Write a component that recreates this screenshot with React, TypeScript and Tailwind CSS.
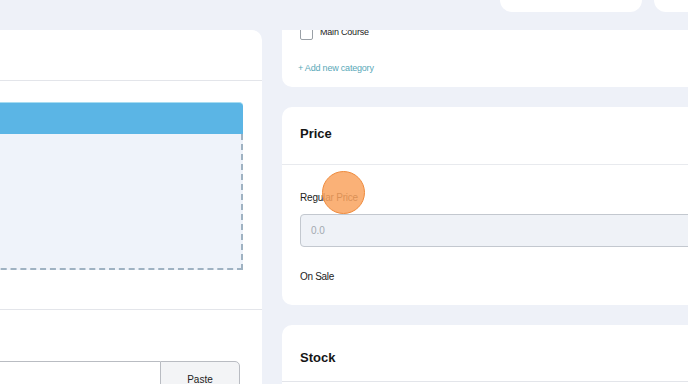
import React from 'react';

const App: React.FC = () => {
  return (
    <div className="relative w-[688px] h-[384px] overflow-hidden bg-[#eef1f8] font-['Liberation_Sans',Arial,sans-serif]">
      {/* Top bar */}
      <div className="h-[30px] flex items-start justify-end gap-3 relative z-10 bg-[#eef1f8]">
        <button className="w-[142px] h-[36px] -mt-[24px] bg-white rounded-[12px] flex items-end justify-center pb-[10px] text-[9px] text-[#9dd3e8]">
          Save as Draft
        </button>
        <button className="w-[142px] h-[36px] -mt-[24px] -mr-[108px] bg-white rounded-[12px] flex items-end justify-center pb-[10px] text-[9px] text-[#9dd3e8]">
          Publish
        </button>
      </div>

      {/* Body */}
      <div className="flex items-start gap-5 h-[354px]">
        {/* Left column */}
        <div className="flex-none w-[300px] -ml-[38px] bg-white rounded-tr-[10px]">
          <div className="h-[51px] border-b border-[#e3e5ea]" />
          <div className="pt-[21px] pl-[19px] pr-[19px] pb-[39px] border-b border-[#e3e5ea]">
            <div className="h-[32px] bg-[#5bb5e5] border-t border-[#a6dcf1] rounded-tr-[4px]" />
            <div className="h-[136px] bg-[#eff3fa] border-r-2 border-b-2 border-dashed border-[#9fb2c2]" />
          </div>
          <div className="pt-[51px] pl-[19px] pr-[22px] pb-[20px]">
            <div className="flex h-[32px]">
              <div className="flex-1 border-t border-l border-[#b9bcc2] bg-white" />
              <button className="w-[80px] border border-[#b9bcc2] bg-[#f3f4f6] rounded-tr-[5px] text-[10px] text-[#222] pt-[10px] flex justify-center items-start">
                Paste
              </button>
            </div>
          </div>
        </div>

        {/* Right column */}
        <div className="flex-none w-[440px] flex flex-col gap-5">
          <div className="shrink-0 -mt-[30px] bg-white rounded-b-[10px] pt-[26px] px-[18px] pb-[11px]">
            <label className="flex items-center gap-[7px] h-[14px]">
              <span className="w-[13px] h-[13px] border border-[#9aa0a6] rounded-[2px] bg-white" />
              <span className="text-[9px] text-[#222] tracking-[-0.2px]">Main Course</span>
            </label>
            <div className="mt-[22px] h-[14px] flex items-center -ml-[2px] text-[9px] text-[#5aa8b8] tracking-[-0.2px]">
              + Add new category
            </div>
          </div>

          <div className="shrink-0 bg-white rounded-[10px]">
            <div className="h-[58px] border-b border-[#e8eaee] pt-[19px] px-[18px]">
              <div className="text-[13px] leading-[16px] font-bold text-[#151515]">Price</div>
            </div>
            <div className="pt-[26px] px-[18px] pb-[21px]">
              <div className="text-[10px] leading-[14px] text-[#222] tracking-[-0.2px]">Regular Price</div>
              <div className="mt-[9px] h-[33px] bg-[#eff2f7] border border-[#c3c8cf] rounded-[4px] flex items-center pl-[10px] text-[10px] text-[#a3a9b1]">
                0.0
              </div>
              <div className="mt-[23px] text-[10px] leading-[14px] text-[#222] tracking-[-0.3px]">On Sale</div>
            </div>
          </div>

          <div className="shrink-0 bg-white rounded-[10px]">
            <div className="h-[57px] border-b border-[#e3e5ea] pt-[25px] px-[18px]">
              <div className="text-[13px] leading-[16px] font-bold text-[#151515]">Stock</div>
            </div>
            <div className="h-[40px]" />
          </div>
        </div>
      </div>

      {/* Click highlight */}
      <div className="absolute left-[322px] top-[171px] w-[43px] h-[43px] rounded-full bg-[#f9a35f]/85 border border-[#ef8a3c]" />
    </div>
  );
};

export default App;
